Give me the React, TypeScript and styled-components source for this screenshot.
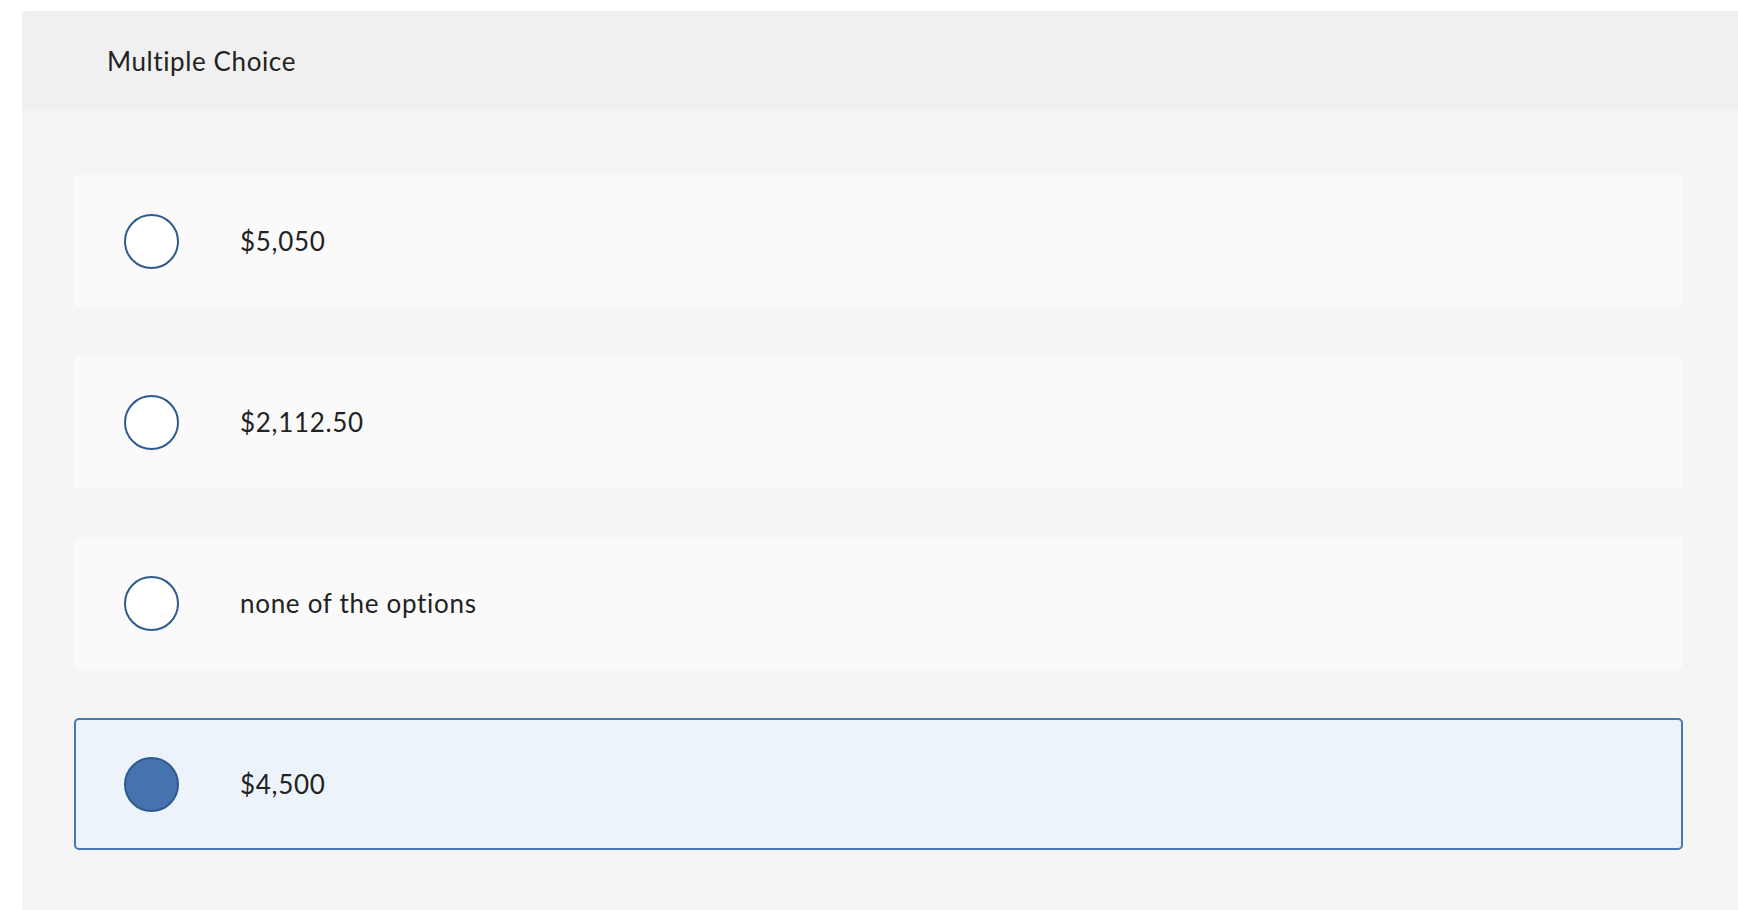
import React from "react";
import styled, { createGlobalStyle } from "styled-components";

const Global = createGlobalStyle`
  html, body { margin: 0; padding: 0; background: #ffffff; }
  body { font-family: Lato, "Noto Sans", sans-serif; color: #222222; overflow: hidden; }
`;

const Page = styled.div`
  padding: 11px 0 0 22px;
  height: 910px;
  box-sizing: border-box;
`;

const Panel = styled.section`
  background: #f5f5f5;
  border-radius: 4px 0 0 0;
  height: 100%;
  display: flex;
  flex-direction: column;
  overflow: hidden;
`;

const Header = styled.header`
  background: #f0f0f0;
  height: 100px;
  display: flex;
  align-items: center;
  padding-left: 85px;
  box-sizing: border-box;
  font-size: 26px;
  letter-spacing: 0.6px;
  color: #222222;
`;

const List = styled.div`
  display: flex;
  flex-direction: column;
  gap: 49px;
  padding: 64px 55px 0 52px;
`;

const Option = styled.label<{ $selected?: boolean }>`
  display: flex;
  align-items: center;
  height: 132px;
  box-sizing: border-box;
  padding-left: 48px;
  border-radius: 5px;
  background: ${(p) => (p.$selected ? "#ecf3fb" : "#fafafa")};
  border: 2px solid ${(p) => (p.$selected ? "#4a76b3" : "transparent")};
  cursor: pointer;
`;

const Radio = styled.span<{ $selected?: boolean }>`
  width: 55px;
  height: 55px;
  box-sizing: border-box;
  border-radius: 50%;
  border: 2px solid #2f5a8e;
  background: ${(p) => (p.$selected ? "#4672b0" : "#ffffff")};
  flex: none;
`;

const OptionText = styled.span`
  margin-left: 61px;
  font-size: 26px;
  letter-spacing: 0.7px;
  color: #222222;
`;

const options = [
  { text: "$5,050", selected: false },
  { text: "$2,112.50", selected: false },
  { text: "none of the options", selected: false },
  { text: "$4,500", selected: true },
];

export default function App() {
  return (
    <>
      <Global />
      <Page>
        <Panel>
          <Header>Multiple Choice</Header>
          <List>
            {options.map((o) => (
              <Option key={o.text} $selected={o.selected}>
                <Radio $selected={o.selected} />
                <OptionText>{o.text}</OptionText>
              </Option>
            ))}
          </List>
        </Panel>
      </Page>
    </>
  );
}
